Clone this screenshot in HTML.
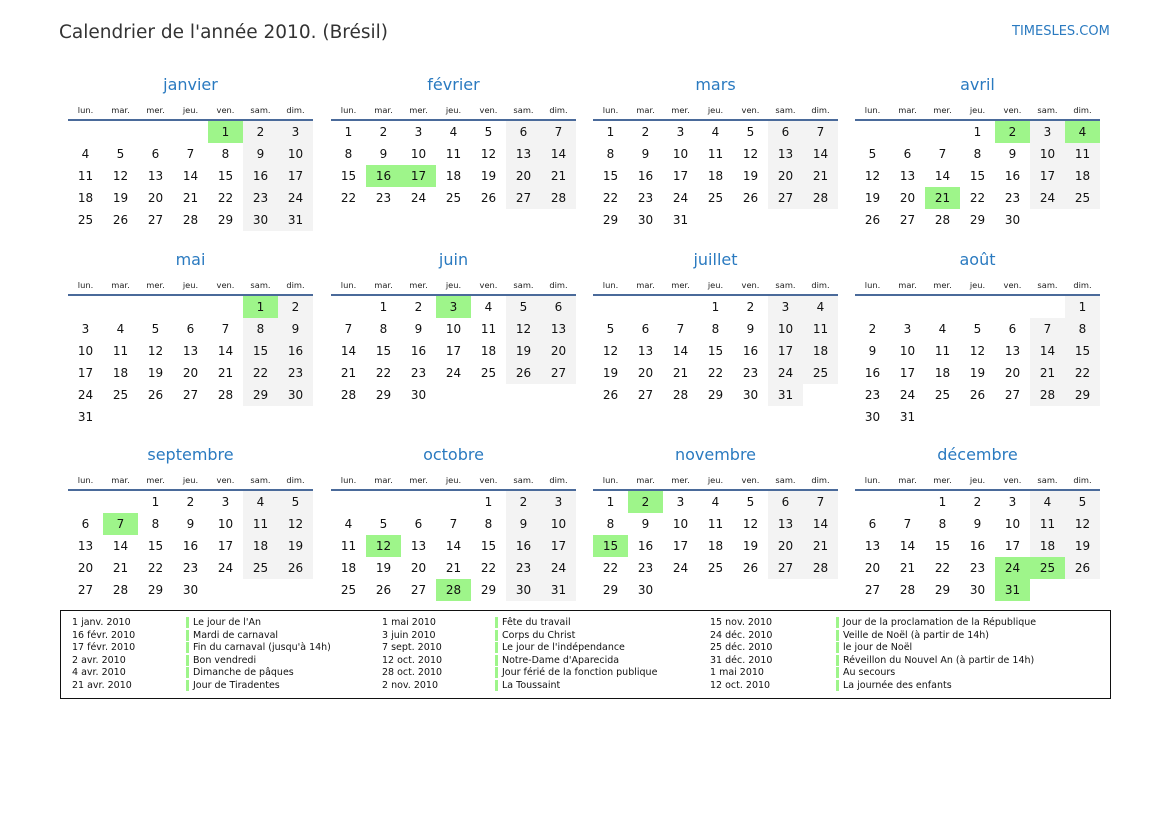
<!DOCTYPE html>
<html><head><meta charset="utf-8"><style>
*{margin:0;padding:0;box-sizing:border-box}
body{width:1169px;height:827px;background:#fff;position:relative;font-family:"DejaVu Sans","Liberation Sans",sans-serif;color:#111;overflow:hidden}
.t{position:absolute;left:59px;top:20px;font-size:18.5px;color:#333;line-height:26px}
.s{position:absolute;left:1012px;top:24px;font-size:13px;color:#2a7ac0;line-height:16px}
.m{position:absolute;width:245px}
.mt{height:22px;line-height:22px;text-align:center;font-size:16px;color:#2a7ac0}
.wd{height:25px;border-bottom:2px solid #4a6a9a;display:flex;padding-top:6px}
.wd span{width:35px;text-align:center;font-size:8.3px;line-height:17px;color:#222}
table{border-collapse:collapse;table-layout:fixed;width:245px}
td{width:35px;height:22px;padding:0;text-align:center;font-size:12px;line-height:22px}
td:nth-child(6):not(:empty),td:nth-child(7):not(:empty){background:#f3f3f3}
td.h,td.h:nth-child(6),td.h:nth-child(7){background:#9ef58a}
.lg{position:absolute;left:60px;top:610px;width:1051px;height:89px;border:1.5px solid #111}
.c{position:absolute;top:6px;font-size:9.5px;line-height:12.6px;color:#111;white-space:nowrap}
.b span{display:block;border-left:3px solid #9ef58a;padding-left:4px;height:11px;line-height:11px;margin-bottom:1.6px}
</style></head><body>
<div class="t">Calendrier de l'année 2010. (Brésil)</div>
<div class="s">TIMESLES.COM</div>

<div class="m" style="left:68px;top:74px"><div class="mt">janvier</div><div class="wd"><span>lun.</span><span>mar.</span><span>mer.</span><span>jeu.</span><span>ven.</span><span>sam.</span><span>dim.</span></div>
<table><tr><td></td><td></td><td></td><td></td><td class="h">1</td><td>2</td><td>3</td></tr>
<tr><td>4</td><td>5</td><td>6</td><td>7</td><td>8</td><td>9</td><td>10</td></tr>
<tr><td>11</td><td>12</td><td>13</td><td>14</td><td>15</td><td>16</td><td>17</td></tr>
<tr><td>18</td><td>19</td><td>20</td><td>21</td><td>22</td><td>23</td><td>24</td></tr>
<tr><td>25</td><td>26</td><td>27</td><td>28</td><td>29</td><td>30</td><td>31</td></tr></table></div>

<div class="m" style="left:331px;top:74px"><div class="mt">février</div><div class="wd"><span>lun.</span><span>mar.</span><span>mer.</span><span>jeu.</span><span>ven.</span><span>sam.</span><span>dim.</span></div>
<table><tr><td>1</td><td>2</td><td>3</td><td>4</td><td>5</td><td>6</td><td>7</td></tr>
<tr><td>8</td><td>9</td><td>10</td><td>11</td><td>12</td><td>13</td><td>14</td></tr>
<tr><td>15</td><td class="h">16</td><td class="h">17</td><td>18</td><td>19</td><td>20</td><td>21</td></tr>
<tr><td>22</td><td>23</td><td>24</td><td>25</td><td>26</td><td>27</td><td>28</td></tr></table></div>

<div class="m" style="left:593px;top:74px"><div class="mt">mars</div><div class="wd"><span>lun.</span><span>mar.</span><span>mer.</span><span>jeu.</span><span>ven.</span><span>sam.</span><span>dim.</span></div>
<table><tr><td>1</td><td>2</td><td>3</td><td>4</td><td>5</td><td>6</td><td>7</td></tr>
<tr><td>8</td><td>9</td><td>10</td><td>11</td><td>12</td><td>13</td><td>14</td></tr>
<tr><td>15</td><td>16</td><td>17</td><td>18</td><td>19</td><td>20</td><td>21</td></tr>
<tr><td>22</td><td>23</td><td>24</td><td>25</td><td>26</td><td>27</td><td>28</td></tr>
<tr><td>29</td><td>30</td><td>31</td><td></td><td></td><td></td><td></td></tr></table></div>

<div class="m" style="left:855px;top:74px"><div class="mt">avril</div><div class="wd"><span>lun.</span><span>mar.</span><span>mer.</span><span>jeu.</span><span>ven.</span><span>sam.</span><span>dim.</span></div>
<table><tr><td></td><td></td><td></td><td>1</td><td class="h">2</td><td>3</td><td class="h">4</td></tr>
<tr><td>5</td><td>6</td><td>7</td><td>8</td><td>9</td><td>10</td><td>11</td></tr>
<tr><td>12</td><td>13</td><td>14</td><td>15</td><td>16</td><td>17</td><td>18</td></tr>
<tr><td>19</td><td>20</td><td class="h">21</td><td>22</td><td>23</td><td>24</td><td>25</td></tr>
<tr><td>26</td><td>27</td><td>28</td><td>29</td><td>30</td><td></td><td></td></tr></table></div>

<div class="m" style="left:68px;top:249px"><div class="mt">mai</div><div class="wd"><span>lun.</span><span>mar.</span><span>mer.</span><span>jeu.</span><span>ven.</span><span>sam.</span><span>dim.</span></div>
<table><tr><td></td><td></td><td></td><td></td><td></td><td class="h">1</td><td>2</td></tr>
<tr><td>3</td><td>4</td><td>5</td><td>6</td><td>7</td><td>8</td><td>9</td></tr>
<tr><td>10</td><td>11</td><td>12</td><td>13</td><td>14</td><td>15</td><td>16</td></tr>
<tr><td>17</td><td>18</td><td>19</td><td>20</td><td>21</td><td>22</td><td>23</td></tr>
<tr><td>24</td><td>25</td><td>26</td><td>27</td><td>28</td><td>29</td><td>30</td></tr>
<tr><td>31</td><td></td><td></td><td></td><td></td><td></td><td></td></tr></table></div>

<div class="m" style="left:331px;top:249px"><div class="mt">juin</div><div class="wd"><span>lun.</span><span>mar.</span><span>mer.</span><span>jeu.</span><span>ven.</span><span>sam.</span><span>dim.</span></div>
<table><tr><td></td><td>1</td><td>2</td><td class="h">3</td><td>4</td><td>5</td><td>6</td></tr>
<tr><td>7</td><td>8</td><td>9</td><td>10</td><td>11</td><td>12</td><td>13</td></tr>
<tr><td>14</td><td>15</td><td>16</td><td>17</td><td>18</td><td>19</td><td>20</td></tr>
<tr><td>21</td><td>22</td><td>23</td><td>24</td><td>25</td><td>26</td><td>27</td></tr>
<tr><td>28</td><td>29</td><td>30</td><td></td><td></td><td></td><td></td></tr></table></div>

<div class="m" style="left:593px;top:249px"><div class="mt">juillet</div><div class="wd"><span>lun.</span><span>mar.</span><span>mer.</span><span>jeu.</span><span>ven.</span><span>sam.</span><span>dim.</span></div>
<table><tr><td></td><td></td><td></td><td>1</td><td>2</td><td>3</td><td>4</td></tr>
<tr><td>5</td><td>6</td><td>7</td><td>8</td><td>9</td><td>10</td><td>11</td></tr>
<tr><td>12</td><td>13</td><td>14</td><td>15</td><td>16</td><td>17</td><td>18</td></tr>
<tr><td>19</td><td>20</td><td>21</td><td>22</td><td>23</td><td>24</td><td>25</td></tr>
<tr><td>26</td><td>27</td><td>28</td><td>29</td><td>30</td><td>31</td><td></td></tr></table></div>

<div class="m" style="left:855px;top:249px"><div class="mt">août</div><div class="wd"><span>lun.</span><span>mar.</span><span>mer.</span><span>jeu.</span><span>ven.</span><span>sam.</span><span>dim.</span></div>
<table><tr><td></td><td></td><td></td><td></td><td></td><td></td><td>1</td></tr>
<tr><td>2</td><td>3</td><td>4</td><td>5</td><td>6</td><td>7</td><td>8</td></tr>
<tr><td>9</td><td>10</td><td>11</td><td>12</td><td>13</td><td>14</td><td>15</td></tr>
<tr><td>16</td><td>17</td><td>18</td><td>19</td><td>20</td><td>21</td><td>22</td></tr>
<tr><td>23</td><td>24</td><td>25</td><td>26</td><td>27</td><td>28</td><td>29</td></tr>
<tr><td>30</td><td>31</td><td></td><td></td><td></td><td></td><td></td></tr></table></div>

<div class="m" style="left:68px;top:444px"><div class="mt">septembre</div><div class="wd"><span>lun.</span><span>mar.</span><span>mer.</span><span>jeu.</span><span>ven.</span><span>sam.</span><span>dim.</span></div>
<table><tr><td></td><td></td><td>1</td><td>2</td><td>3</td><td>4</td><td>5</td></tr>
<tr><td>6</td><td class="h">7</td><td>8</td><td>9</td><td>10</td><td>11</td><td>12</td></tr>
<tr><td>13</td><td>14</td><td>15</td><td>16</td><td>17</td><td>18</td><td>19</td></tr>
<tr><td>20</td><td>21</td><td>22</td><td>23</td><td>24</td><td>25</td><td>26</td></tr>
<tr><td>27</td><td>28</td><td>29</td><td>30</td><td></td><td></td><td></td></tr></table></div>

<div class="m" style="left:331px;top:444px"><div class="mt">octobre</div><div class="wd"><span>lun.</span><span>mar.</span><span>mer.</span><span>jeu.</span><span>ven.</span><span>sam.</span><span>dim.</span></div>
<table><tr><td></td><td></td><td></td><td></td><td>1</td><td>2</td><td>3</td></tr>
<tr><td>4</td><td>5</td><td>6</td><td>7</td><td>8</td><td>9</td><td>10</td></tr>
<tr><td>11</td><td class="h">12</td><td>13</td><td>14</td><td>15</td><td>16</td><td>17</td></tr>
<tr><td>18</td><td>19</td><td>20</td><td>21</td><td>22</td><td>23</td><td>24</td></tr>
<tr><td>25</td><td>26</td><td>27</td><td class="h">28</td><td>29</td><td>30</td><td>31</td></tr></table></div>

<div class="m" style="left:593px;top:444px"><div class="mt">novembre</div><div class="wd"><span>lun.</span><span>mar.</span><span>mer.</span><span>jeu.</span><span>ven.</span><span>sam.</span><span>dim.</span></div>
<table><tr><td>1</td><td class="h">2</td><td>3</td><td>4</td><td>5</td><td>6</td><td>7</td></tr>
<tr><td>8</td><td>9</td><td>10</td><td>11</td><td>12</td><td>13</td><td>14</td></tr>
<tr><td class="h">15</td><td>16</td><td>17</td><td>18</td><td>19</td><td>20</td><td>21</td></tr>
<tr><td>22</td><td>23</td><td>24</td><td>25</td><td>26</td><td>27</td><td>28</td></tr>
<tr><td>29</td><td>30</td><td></td><td></td><td></td><td></td><td></td></tr></table></div>

<div class="m" style="left:855px;top:444px"><div class="mt">décembre</div><div class="wd"><span>lun.</span><span>mar.</span><span>mer.</span><span>jeu.</span><span>ven.</span><span>sam.</span><span>dim.</span></div>
<table><tr><td></td><td></td><td>1</td><td>2</td><td>3</td><td>4</td><td>5</td></tr>
<tr><td>6</td><td>7</td><td>8</td><td>9</td><td>10</td><td>11</td><td>12</td></tr>
<tr><td>13</td><td>14</td><td>15</td><td>16</td><td>17</td><td>18</td><td>19</td></tr>
<tr><td>20</td><td>21</td><td>22</td><td>23</td><td class="h">24</td><td class="h">25</td><td>26</td></tr>
<tr><td>27</td><td>28</td><td>29</td><td>30</td><td class="h">31</td><td></td><td></td></tr></table></div>

<div class="lg">
<div class="c" style="left:11px">1 janv. 2010<br>16 févr. 2010<br>17 févr. 2010<br>2 avr. 2010<br>4 avr. 2010<br>21 avr. 2010</div>
<div class="c b" style="left:125px"><span>Le jour de l'An</span><span>Mardi de carnaval</span><span>Fin du carnaval (jusqu'à 14h)</span><span>Bon vendredi</span><span>Dimanche de pâques</span><span>Jour de Tiradentes</span></div>
<div class="c" style="left:321px">1 mai 2010<br>3 juin 2010<br>7 sept. 2010<br>12 oct. 2010<br>28 oct. 2010<br>2 nov. 2010</div>
<div class="c b" style="left:434px"><span>Fête du travail</span><span>Corps du Christ</span><span>Le jour de l'indépendance</span><span>Notre-Dame d'Aparecida</span><span>Jour férié de la fonction publique</span><span>La Toussaint</span></div>
<div class="c" style="left:649px">15 nov. 2010<br>24 déc. 2010<br>25 déc. 2010<br>31 déc. 2010<br>1 mai 2010<br>12 oct. 2010</div>
<div class="c b" style="left:775px"><span>Jour de la proclamation de la République</span><span>Veille de Noël (à partir de 14h)</span><span>le jour de Noël</span><span>Réveillon du Nouvel An (à partir de 14h)</span><span>Au secours</span><span>La journée des enfants</span></div>
</div>
</body></html>
